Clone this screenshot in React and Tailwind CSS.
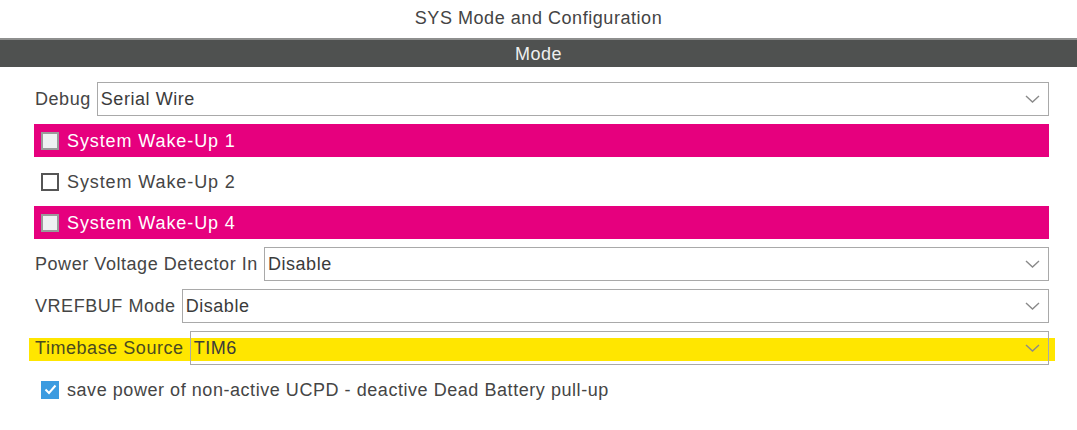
import React from "react";

const font = { fontFamily: '"Liberation Sans", Arial, sans-serif' };

function Chevron() {
  return (
    <svg width="15" height="8" viewBox="0 0 15 8" className="shrink-0">
      <path d="M1 1 L7.5 7 L14 1" fill="none" stroke="#8a8a8a" strokeWidth="1.4" />
    </svg>
  );
}

function Select({ value, transparent }) {
  return (
    <div
      className={`flex-1 h-[34px] border border-[#a9a9a9] flex items-center pl-[3px] pr-[8px] ${
        transparent ? "bg-transparent" : "bg-white"
      }`}
    >
      <span className="flex-1 text-[#3b3b3b]">{value}</span>
      <Chevron />
    </div>
  );
}

function LabeledSelect({ label, value }) {
  return (
    <div className="flex items-center gap-[6px] pl-[1px]">
      <span className="text-[#454545] whitespace-nowrap">{label}</span>
      <Select value={value} />
    </div>
  );
}

function Box({ checked, onPink }) {
  if (checked) {
    return (
      <span className="w-[18px] h-[18px] bg-[#3c9be0] flex items-center justify-center shrink-0">
        <svg width="13" height="11" viewBox="0 0 13 11">
          <path d="M1.5 5.5 L5 9 L11.5 1.5" fill="none" stroke="white" strokeWidth="2" />
        </svg>
      </span>
    );
  }
  return (
    <span
      className={`w-[18px] h-[18px] border-2 shrink-0 ${
        onPink ? "bg-[#eef0f2] border-[#9a9a9a]" : "bg-white border-[#555]"
      }`}
    />
  );
}

function CheckRow({ label, pink }) {
  return (
    <div
      className={`h-[33px] flex items-center gap-[8px] pl-[7px] ${
        pink ? "bg-[#e6007e] text-white" : "text-[#454545]"
      }`}
    >
      <Box onPink={pink} />
      <span className="tracking-[0.9px]">{label}</span>
    </div>
  );
}

export default function App() {
  return (
    <div
      className="w-[1077px] h-[430px] bg-white text-[18px] leading-none tracking-[0.55px]"
      style={font}
    >
      <div className="h-[38px] pb-[3px] flex items-center justify-center text-[#444]">
        SYS Mode and Configuration
      </div>
      <div className="h-[29px] bg-[#4f5150] border-t-2 border-[#8e8f8e] flex items-center justify-center text-[#eeeeee]">
        Mode
      </div>
      <div className="pl-[34px] pr-[28px] pt-[15px] flex flex-col gap-[8px]">
        <LabeledSelect label="Debug" value="Serial Wire" />
        <CheckRow label="System Wake-Up 1" pink />
        <CheckRow label="System Wake-Up 2" />
        <CheckRow label="System Wake-Up 4" pink />
        <LabeledSelect label="Power Voltage Detector In" value="Disable" />
        <LabeledSelect label="VREFBUF Mode" value="Disable" />
        <div className="relative flex items-center gap-[6px] pl-[1px]">
          <div className="absolute left-[-5px] right-[-6px] top-[7px] h-[23px] bg-[#ffe600]" />
          <span className="relative text-[#4a4a20] whitespace-nowrap">Timebase Source</span>
          <div className="relative flex-1 flex">
            <Select value="TIM6" transparent />
          </div>
        </div>
        <div className="h-[33px] flex items-center gap-[8px] pl-[7px] text-[#454545]">
          <Box checked />
          <span>save power of non-active UCPD - deactive Dead Battery pull-up</span>
        </div>
      </div>
    </div>
  );
}
